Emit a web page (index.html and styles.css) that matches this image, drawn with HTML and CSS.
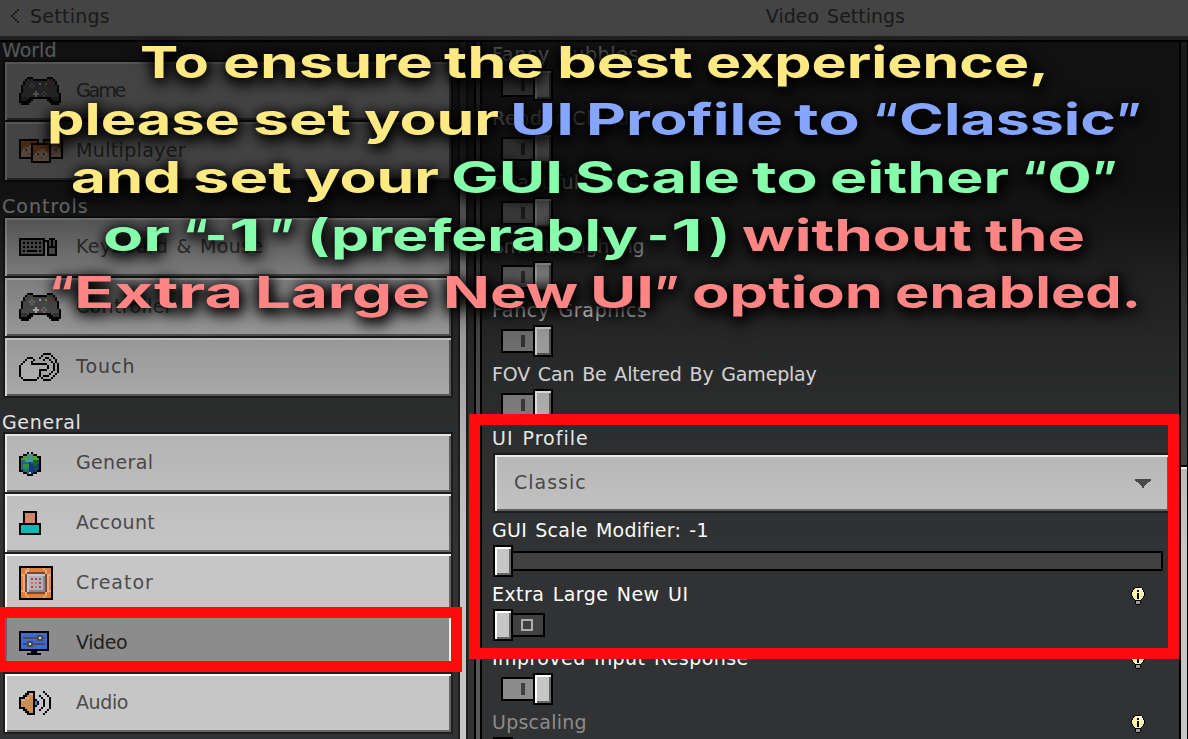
FILE: index.html
```html
<!DOCTYPE html>
<html lang="en">
<head>
<meta charset="utf-8">
<title>Video Settings</title>
<link rel="stylesheet" href="styles.css">
</head>
<body>
<svg class="defs" aria-hidden="true">
  <symbol id="pad" viewBox="0 0 21 14">
    <path d="M4 0h3v1h7V0h3v1h1v1h1v2h1v4h1v5h-1v1h-4v-1h-1v-1h-1v-1H7v1H6v1H5v1H1v-1H0V8h1V4h1V2h1V1h1z"/>
    <path fill="#636363" d="M4 1h3v1h7V1h3v1h1v2h1v4h1v4h-3v-1h-1v-1H5v1H4v1H1V8h1V4h1V2h1z"/>
    <path fill="#484848" d="M1 10h3v2H1zM17 10h3v2h-3z"/>
    <path fill="#9a9a9a" d="M6 3h1v1H6zM5 4h1v1H5zM7 4h1v1H7zM6 5h1v1H6zM12 7h1v1h-1zM11 8h1v1h-1zM13 8h1v1h-1zM12 9h1v1h-1z"/>
    <path fill="#e6e6e6" d="M8 7h1v1h1v1H9v1H8V9H7V8h1zM10 3h1v1h-1z"/>
    <path fill="#c8b840" d="M13 3h1v1h-1z"/><path fill="#c33" d="M15 3h1v1h-1z"/><path fill="#38a" d="M13 5h1v1h-1z"/><path fill="#4a6a3a" d="M15 5h1v1h-1z"/>
  </symbol>
  <symbol id="face" viewBox="0 0 10 10">
    <path d="M0 0h10v10H0z"/><path fill="#f4cba8" d="M1 1h8v8H1z"/><path fill="#d8782e" d="M1 1h8v4H8V4H7V3H5v1H3v1H2v1H1z"/>
    <path fill="#fff" d="M2 5h1v1H2zM7 5h1v1H7z"/><path fill="#3a6a35" d="M3 5h1v1H3zM6 5h1v1H6z"/><path fill="#e0a090" d="M4 7h2v1H4z"/>
  </symbol>
  <symbol id="bulb" viewBox="0 0 14 18">
    <path d="M4 0h6v1h2v2h1v2h1v4h-1v2h-1v1h-1v1h-1v4H9v1H5v-1H4v-4H3v-1H2v-1H1V9H0V5h1V3h1V1h2z"/>
    <path fill="#fbf6a5" d="M4 1h6v1h1v1h1v2h1v4h-1v2h-1v1h-1v1H4v-1H3v-1H2V9H1V5h1V3h1V2h1z"/>
    <path fill="#fff" d="M8 1h3v2h1v3h-1V4H9V3H8z"/><path d="M6 3h2v2H6zM6 6h2v6H6z"/><path fill="#9b9b9b" d="M5 14h4v3H5z"/>
  </symbol>
</svg>

<header class="topbar">
  <svg class="back" viewBox="0 0 4 7"><path d="M3 0h1v1H3zM2 1h1v1H2zM1 2h1v1H1zM0 3h1v1H0zM1 4h1v1H1zM2 5h1v1H2zM3 6h1v1H3z"/></svg>
  <span class="topbar-back">Settings</span>
  <h1 class="topbar-title">Video Settings</h1>
</header>

<div class="main">
  <nav class="sidebar">
    <h2>World</h2>
    <div class="menu">
      <a class="item narrow"><span class="ico"><svg width="42" height="28"><use href="#pad"/></svg></span>Game</a>
      <a class="item"><span class="ico"><svg width="44" height="24" viewBox="0 0 22 12"><use href="#face" width="10" height="10"/><use href="#face" x="12" width="10" height="10"/><use href="#face" x="6" y="2" width="10" height="10"/></svg></span>Multiplayer</a>
    </div>
    <h2 class="wide">Controls</h2>
    <div class="menu">
      <a class="item"><span class="ico"><svg width="38" height="18" viewBox="0 0 19 9"><path d="M0 0h13v9H0zM15 0h3v1h1v8h-5V1h1zM13 1h2v1h-2z"/><path fill="#808080" d="M1 1h11v7H1zM15 1h1v3h-1zM17 1h1v3h-1zM15 5h3v3h-3z"/><path d="M2 2h1v1H2zM4 2h1v1H4zM6 2h1v1H6zM8 2h1v1H8zM10 2h1v1h-1zM2 4h1v1H2zM4 4h1v1H4zM6 4h1v1H6zM8 4h1v1H8zM10 4h1v1h-1zM2 6h1v1H2zM4 6h5v1H4zM10 6h1v1h-1z"/></svg></span>Keyboard &amp; Mouse</a>
      <a class="item"><span class="ico"><svg width="42" height="28"><use href="#pad"/></svg></span>Controller</a>
      <a class="item wide"><span class="ico"><svg width="40" height="28" viewBox="0 0 20 14"><path fill="#d2d2d2" d="M4 2h3v4h7v2h-4v3H9v2H2v-1H1V6h1V4h1V3h1z"/><path d="M4 2h3v1H4zM3 3h1v1H3zM2 4h1v1H2zM1 5h1v1H1zM0 6h1v6H0zM1 12h1v1H1zM2 13h7v1H2zM9 12h1v1H9zM10 9h1v3h-1zM7 3h1v1H7zM6 4h1v1H6zM6 5h8v1H6zM14 6h1v2h-1zM10 8h4v1h-4zM10 2h1v1h-1zM11 1h1v1h-1zM12 0h4v1h-4zM16 1h1v1h-1zM17 2h1v1h-1zM18 3h1v2h-1zM19 5h1v5h-1zM18 10h1v1h-1zM17 11h1v1h-1zM16 12h1v1h-1zM12 13h4v1h-4zM11 12h1v1h-1zM12 3h1V2h2v1h1v1h-1V3h-2v1h-1zM16 4h1v1h-1zM17 5h1v4h-1zM16 9h1v1h-1zM15 10h1v1h-1zM12 11h3v1h-3z"/></svg></span>Touch</a>
    </div>
    <h2 class="semiwide">General</h2>
    <div class="menu">
      <a class="item"><span class="ico ico-low"><svg width="22" height="24" viewBox="0 0 11 12"><path d="M4 0h3v1h2v1h2v8H9v1H7v1H4v-1H2v-1H0V2h2V1h2z"/><path fill="#246d8c" d="M4 1h3v1h2v1h1v6H9v1H7v1H4v-1H2V9H1V3h1V2h2z"/><path fill="#123f86" d="M6 4h4v5H9v1H7v1H5V5h1z"/><path fill="#56a93c" d="M4 1h3v1h2v1h1v1H8v1H3V4H1V3h1V2h2z"/><path fill="#3a9a36" d="M2 6h3v2H4v1H3V8H2z"/><path fill="#4a90d8" d="M5 1h2v1H6v1H5v1H4V3h1z"/><path fill="#1e6a38" d="M7 4h2v1h1v1H9v1H7V6H6V5h1zM8 8h1v1H8z"/><path fill="#3f9fe0" d="M4 4h3v1H4z"/><path fill="#ccc" d="M5 0h1v1H5zM5 10h1v1H5z"/></svg></span>General</a>
      <a class="item"><span class="ico"><svg width="22" height="24" viewBox="0 0 11 12"><path d="M2 0h7v6h2v6H0V6h2z"/><path fill="#cf8d69" d="M3 1h5v5H3z"/><path fill="#14b8b8" d="M1 7h9v4H1z"/></svg></span>Account</a>
      <a class="item wide"><span class="ico"><svg width="34" height="34" viewBox="0 0 17 17"><path d="M0 0h17v17H0z"/><path fill="#dd803f" d="M1 1h15v15H1z"/><path fill="#efa878" d="M4 1h1v2h8V1h-1v1h2v2h2v1h-1v7h1v1h-2v2h-2v1h1v-2H4v2h1v-1H3v-2H1v-1h1V5H1V4h2V2h1z"/><path fill="#704b3c" d="M4 3h9v1h1v9h-1v1H4v-1H3V4h1z"/><path fill="#c5c2d0" d="M4 4h9v9H4z"/><path fill="#8a8794" d="M12 5h1v8H5v-1h7z"/><path fill="#b3b0bd" d="M5 5h7v7H5z"/><path fill="#c23b30" d="M6 6h1v1H6zM8 6h1v1H8zM10 8h1v1h-1zM6 10h1v1H6zM10 10h1v1h-1z"/><path fill="#5f7040" d="M10 6h1v1h-1z"/><path fill="#d8783b" d="M6 8h1v1H6zM8 8h1v1H8zM8 10h1v1H8z"/></svg></span>Creator</a>
      <a class="item active tight"><span class="ico"><svg width="30" height="24" viewBox="0 0 15 12"><path d="M0 0h15v10H9v1h2v1H4v-1h2v-1H0z"/><path fill="#396bd0" d="M1 1h13v8H1z"/><path fill="#4a4a4d" d="M2 3h7V2h3v1h1v1h-1v1H9V4H2zM2 6h2V5h3v1h6v1H7v1H4V7H2z"/><path fill="#ddd" d="M10 3h1v1h-1zM5 6h1v1H5z"/></svg></span>Video</a>
      <a class="item tight"><span class="ico"><svg width="32" height="24" viewBox="0 0 16 12"><path d="M4 0h4v4h1v1h1v2H9v1H8v4H4v-1H3v-1H2V9H0V3h2V2h1V1h1z"/><path fill="#c98c53" d="M5 1h2v10H5v-1H4V9H3V8H1V4h2V3h1V2h1z"/><path fill="#e0ac77" d="M5 1h2v1H5zM3 3h2v1H3zM1 4h2v1H1z"/><path fill="#2b83f0" d="M8 5h1v2H8z"/><path d="M10 2h1v1h-1zM11 3h1v1h-1zM12 4h1v4h-1zM11 8h1v1h-1zM10 9h1v1h-1zM12 0h1v1h-1zM13 1h1v1h-1zM14 2h1v1h-1zM15 3h1v6h-1zM14 9h1v1h-1zM13 10h1v1h-1zM12 11h1v1h-1z"/></svg></span>Audio</a>
    </div>
  </nav>
  <div class="bar bar-left"></div>
  <div class="divider"></div>

  <section class="panel">
    <div class="row"><label class="semiwide">Fancy Bubbles</label><span class="toggle on"><i></i><b></b></span></div>
    <div class="row"><label class="semiwide">Render Clouds</label><span class="toggle on"><i></i><b></b></span></div>
    <div class="row"><label>Beautiful Skies</label><span class="toggle on"><i></i><b></b></span></div>
    <div class="row"><label class="tight">Smooth Lighting</label><span class="toggle on"><i></i><b></b></span></div>
    <div class="row"><label class="semiwide">Fancy Graphics</label><span class="toggle on"><i></i><b></b></span></div>
    <div class="row"><label class="semitight">FOV Can Be Altered By Gameplay</label><span class="toggle on"><i></i><b></b></span></div>
    <div class="row tall"><label class="wide">UI Profile</label>
      <div class="select"><span class="wide">Classic</span><svg width="16" height="9" viewBox="0 0 16 9"><path d="M0 0h16v2h-1v1h-2v1h-1v1h-1v1h-1v1H9v2H7V7H6V6H5V5H4V4H3V3H1V2H0z"/></svg></div></div>
    <div class="row"><label>GUI Scale Modifier: -1</label><span class="slider"><b></b><i></i></span></div>
    <div class="row"><label class="loose">Extra Large New UI</label><span class="toggle off"><b></b><i></i></span><svg class="bulb"><use href="#bulb"/></svg></div>
    <div class="row"><label class="loose">Improved Input Response</label><span class="toggle on"><i></i><b></b></span><svg class="bulb"><use href="#bulb"/></svg></div>
    <div class="row dim"><label>Upscaling</label><span class="toggle off"><b></b><i></i></span><svg class="bulb"><use href="#bulb"/></svg></div>
  </section>
  <div class="bar bar-right"><div class="thumb"></div></div>
</div>

<div class="shade"></div>
<div class="mark mark-video"></div>
<div class="mark mark-profile"></div>

<svg class="notice" viewBox="0 0 1188 340">
  <g class="yellow">
    <text x="140" y="78" textLength="69" lengthAdjust="spacingAndGlyphs">To</text>
    <text x="223" y="78" textLength="210" lengthAdjust="spacingAndGlyphs">ensure</text>
    <text x="444" y="78" textLength="100" lengthAdjust="spacingAndGlyphs">the</text>
    <text x="557" y="78" textLength="136" lengthAdjust="spacingAndGlyphs">best</text>
    <text x="706" y="78" textLength="343" lengthAdjust="spacingAndGlyphs">experience,</text>
    <text x="47" y="135" textLength="193" lengthAdjust="spacingAndGlyphs">please</text>
    <text x="253" y="135" textLength="98" lengthAdjust="spacingAndGlyphs">set</text>
    <text x="364" y="135" textLength="135" lengthAdjust="spacingAndGlyphs">your</text>
    <text x="71" y="193" textLength="110" lengthAdjust="spacingAndGlyphs">and</text>
    <text x="193" y="193" textLength="99" lengthAdjust="spacingAndGlyphs">set</text>
    <text x="304" y="193" textLength="135" lengthAdjust="spacingAndGlyphs">your</text>
  </g>
  <g class="blue">
    <text x="510" y="135" textLength="64" lengthAdjust="spacingAndGlyphs">UI</text>
    <text x="586" y="135" textLength="197" lengthAdjust="spacingAndGlyphs">Profile</text>
    <text x="794" y="135" textLength="66" lengthAdjust="spacingAndGlyphs">to</text>
    <text y="135"><tspan x="873" textLength="25" lengthAdjust="spacingAndGlyphs">“</tspan><tspan x="899" textLength="217" lengthAdjust="spacingAndGlyphs">Classic</tspan><tspan x="1116" textLength="25" lengthAdjust="spacingAndGlyphs">”</tspan></text>
  </g>
  <g class="green">
    <text x="451" y="193" textLength="112" lengthAdjust="spacingAndGlyphs">GUI</text>
    <text x="575" y="193" textLength="165" lengthAdjust="spacingAndGlyphs">Scale</text>
    <text x="752" y="193" textLength="66" lengthAdjust="spacingAndGlyphs">to</text>
    <text x="830" y="193" textLength="179" lengthAdjust="spacingAndGlyphs">either</text>
    <text y="193"><tspan x="1022" textLength="25" lengthAdjust="spacingAndGlyphs">“</tspan><tspan x="1047" textLength="45" lengthAdjust="spacingAndGlyphs">0</tspan><tspan x="1092" textLength="25" lengthAdjust="spacingAndGlyphs">”</tspan></text>
    <text x="103" y="251" textLength="67" lengthAdjust="spacingAndGlyphs">or</text>
    <text y="251"><tspan x="183" textLength="25" lengthAdjust="spacingAndGlyphs">“</tspan><tspan x="205" textLength="22" lengthAdjust="spacingAndGlyphs">-</tspan><tspan x="229" textLength="32" lengthAdjust="spacingAndGlyphs">1</tspan><tspan x="269" textLength="25" lengthAdjust="spacingAndGlyphs">”</tspan></text>
    <text x="307" y="251" textLength="331" lengthAdjust="spacingAndGlyphs">(preferably</text>
    <text y="251"><tspan x="647" textLength="22" lengthAdjust="spacingAndGlyphs">-</tspan><tspan x="671" textLength="32" lengthAdjust="spacingAndGlyphs">1</tspan><tspan x="709" textLength="21" lengthAdjust="spacingAndGlyphs">)</tspan></text>
  </g>
  <g class="red">
    <text x="742" y="251" textLength="230" lengthAdjust="spacingAndGlyphs">without</text>
    <text x="985" y="251" textLength="100" lengthAdjust="spacingAndGlyphs">the</text>
    <text y="308"><tspan x="49" textLength="25" lengthAdjust="spacingAndGlyphs">“</tspan><tspan x="74" textLength="169" lengthAdjust="spacingAndGlyphs">Extra</tspan></text>
    <text x="255" y="308" textLength="175" lengthAdjust="spacingAndGlyphs">Large</text>
    <text x="443" y="308" textLength="135" lengthAdjust="spacingAndGlyphs">New</text>
    <text y="308"><tspan x="590" textLength="64" lengthAdjust="spacingAndGlyphs">UI</tspan><tspan x="654" textLength="25" lengthAdjust="spacingAndGlyphs">”</tspan></text>
    <text x="692" y="308" textLength="191" lengthAdjust="spacingAndGlyphs">option</text>
    <text x="895" y="308" textLength="246" lengthAdjust="spacingAndGlyphs">enabled.</text>
  </g>
</svg>
</body>
</html>
```
FILE: styles.css
```css
*, *::before { box-sizing: border-box; }
body {
  margin: 0; width: 1188px; height: 739px; overflow: hidden; position: relative;
  display: flex; flex-direction: column; background: #313233;
  font: 19px/22px "DejaVu Sans", sans-serif; word-spacing: 2px; color: #fff;
}
.defs { position: absolute; width: 0; height: 0; }
svg { shape-rendering: crispEdges; display: block; }

.topbar {
  flex: none; height: 42px; display: flex; align-items: center; padding: 0 283px 2px 11px;
  background: #c6c6c6; color: #4c4c4c; border-bottom: 2px solid #000; box-shadow: inset 0 -4px #606060;
}
.back { width: 8px; height: 14px; fill: #4c4c4c; margin: -6px 11px 0 0; }
.topbar-back { margin-top: -6px; letter-spacing: .25px; }
.topbar-title { margin: -6px 0 0 auto; font: inherit; }

.main { flex: 1; display: flex; min-height: 0; }
.sidebar { flex: none; width: 458px; padding: 0 5px 0 3px; }
.sidebar h2 { height: 18px; font: inherit; line-height: 16px; margin: 0 0 0 -1px; }
.menu { border: 2px solid #1e1e1f; border-bottom: 0; margin-bottom: 16px; }
.item {
  height: 60px; display: flex; align-items: center; padding: 0 0 2px 14px; color: #4c4c4c;
  background: #c6c6c6; border-bottom: 2px solid #1e1e1f; letter-spacing: .35px;
  box-shadow: inset 2px 2px #fbfbfb, inset -2px -2px #656565;
}
.item.active { background: #8c8c8c; color: #1e1e1f; box-shadow: inset 2px 2px #656565, inset -2px -2px #eee; }
.ico { width: 57px; margin-top: 2px; }
.ico-low { margin-top: 4px; }

.bar-left {
  flex: none; width: 10px; border: solid #1e1e1f; border-width: 0 2px;
  background: linear-gradient(#484848 143px, #000 143px 145px, #c6c6c6 145px);
}
.divider { flex: none; width: 14px; background: linear-gradient(90deg, #313233 6px, #000 6px 8px, #58585a 8px 12px, #000 12px); }

.panel { flex: 1; padding: 1px 14px 0 9px; overflow: hidden; }
.row { height: 64px; position: relative; }
.row.tall { height: 92px; }
.row label { display: block; height: 26px; padding-left: 1px; letter-spacing: .25px; white-space: nowrap; }
.dim label { color: #8c8c8c; }
.bulb { position: absolute; right: 20px; top: 4px; width: 14px; height: 18px; }

/* letter fitting */
.item.narrow { letter-spacing: -2.1px; }
.item.tight, .row label.tight { letter-spacing: -.4px; }
.row label.semitight { letter-spacing: -.18px; }
.row label.loose { letter-spacing: .43px; }
.sidebar h2.semiwide, .row label.semiwide { letter-spacing: .65px; }
.item.wide, .sidebar h2.wide, .row label.wide, .select .wide { letter-spacing: 1px; }

.toggle, .slider { display: flex; align-items: center; height: 32px; margin-left: 2px; }
.toggle.on { margin-left: 10px; }
.toggle i { width: 32px; height: 24px; border: 2px solid #000; }
.toggle.on i { border-right: 0; background: linear-gradient(#404040, #404040) 18px 4px / 4px 12px no-repeat #8c8c8c; }
.toggle.off i { border-left: 0; background: #404040; padding: 4px 8px; }
.toggle.off i::before { content: ""; display: block; width: 12px; height: 12px; border: 2px solid #adadad; }
.toggle b, .slider b {
  flex: none; width: 20px; height: 32px; background: #c6c6c6; border: 2px solid #000;
  box-shadow: inset 2px 2px #fff, inset -2px -2px #656565;
}
.slider { width: 670px; }
.slider i { flex: 1; height: 20px; border: 2px solid #000; border-left: 0; background: #404040; }
.select {
  height: 60px; margin: 0 -6px 0 2px; padding: 0 18px 2px 19px; display: flex; justify-content: space-between; align-items: center;
  color: #4c4c4c; background: #c6c6c6; border: 2px solid #1e1e1f; box-shadow: inset 2px 2px #fbfbfb, inset -2px -2px #656565;
  fill: #4c4c4c;
}
.select svg { margin-top: 2px; }
.bar-right { flex: none; width: 9px; background: #484848; border: solid #000; border-width: 0 1px 0 2px; padding-top: 423px; }
.thumb { height: 274px; background: #c6c6c6; border-top: 2px solid #000; box-shadow: inset 0 2px #fff; }

.shade {
  position: absolute; inset: 0;
  background: linear-gradient(rgba(0,0,0,.66) 0 185px, rgba(0,0,0,.56) 225px, rgba(0,0,0,.36) 280px, rgba(0,0,0,.23) 340px, rgba(0,0,0,.15) 395px, rgba(0,0,0,.09) 440px, rgba(0,0,0,.04) 495px, transparent 560px);
}
.mark { position: absolute; border: 11px solid #ff0b0d; }
.mark-video { left: -6px; top: 607px; width: 468px; height: 65px; }
.mark-profile { left: 469px; top: 414px; width: 710px; height: 245px; }

.notice {
  position: absolute; left: 0; top: 0; width: 1188px; height: 340px; overflow: visible;
  font: 700 44px Inter, sans-serif; font-feature-settings: "calt" 0; word-spacing: 0;
  filter: drop-shadow(1px 3px 7px #000) drop-shadow(1px 2px 7px #000);
}
.yellow { fill: #ffe982; }
.blue { fill: #85a5ff; }
.green { fill: #85ffab; }
.red { fill: #ff8585; }
```
